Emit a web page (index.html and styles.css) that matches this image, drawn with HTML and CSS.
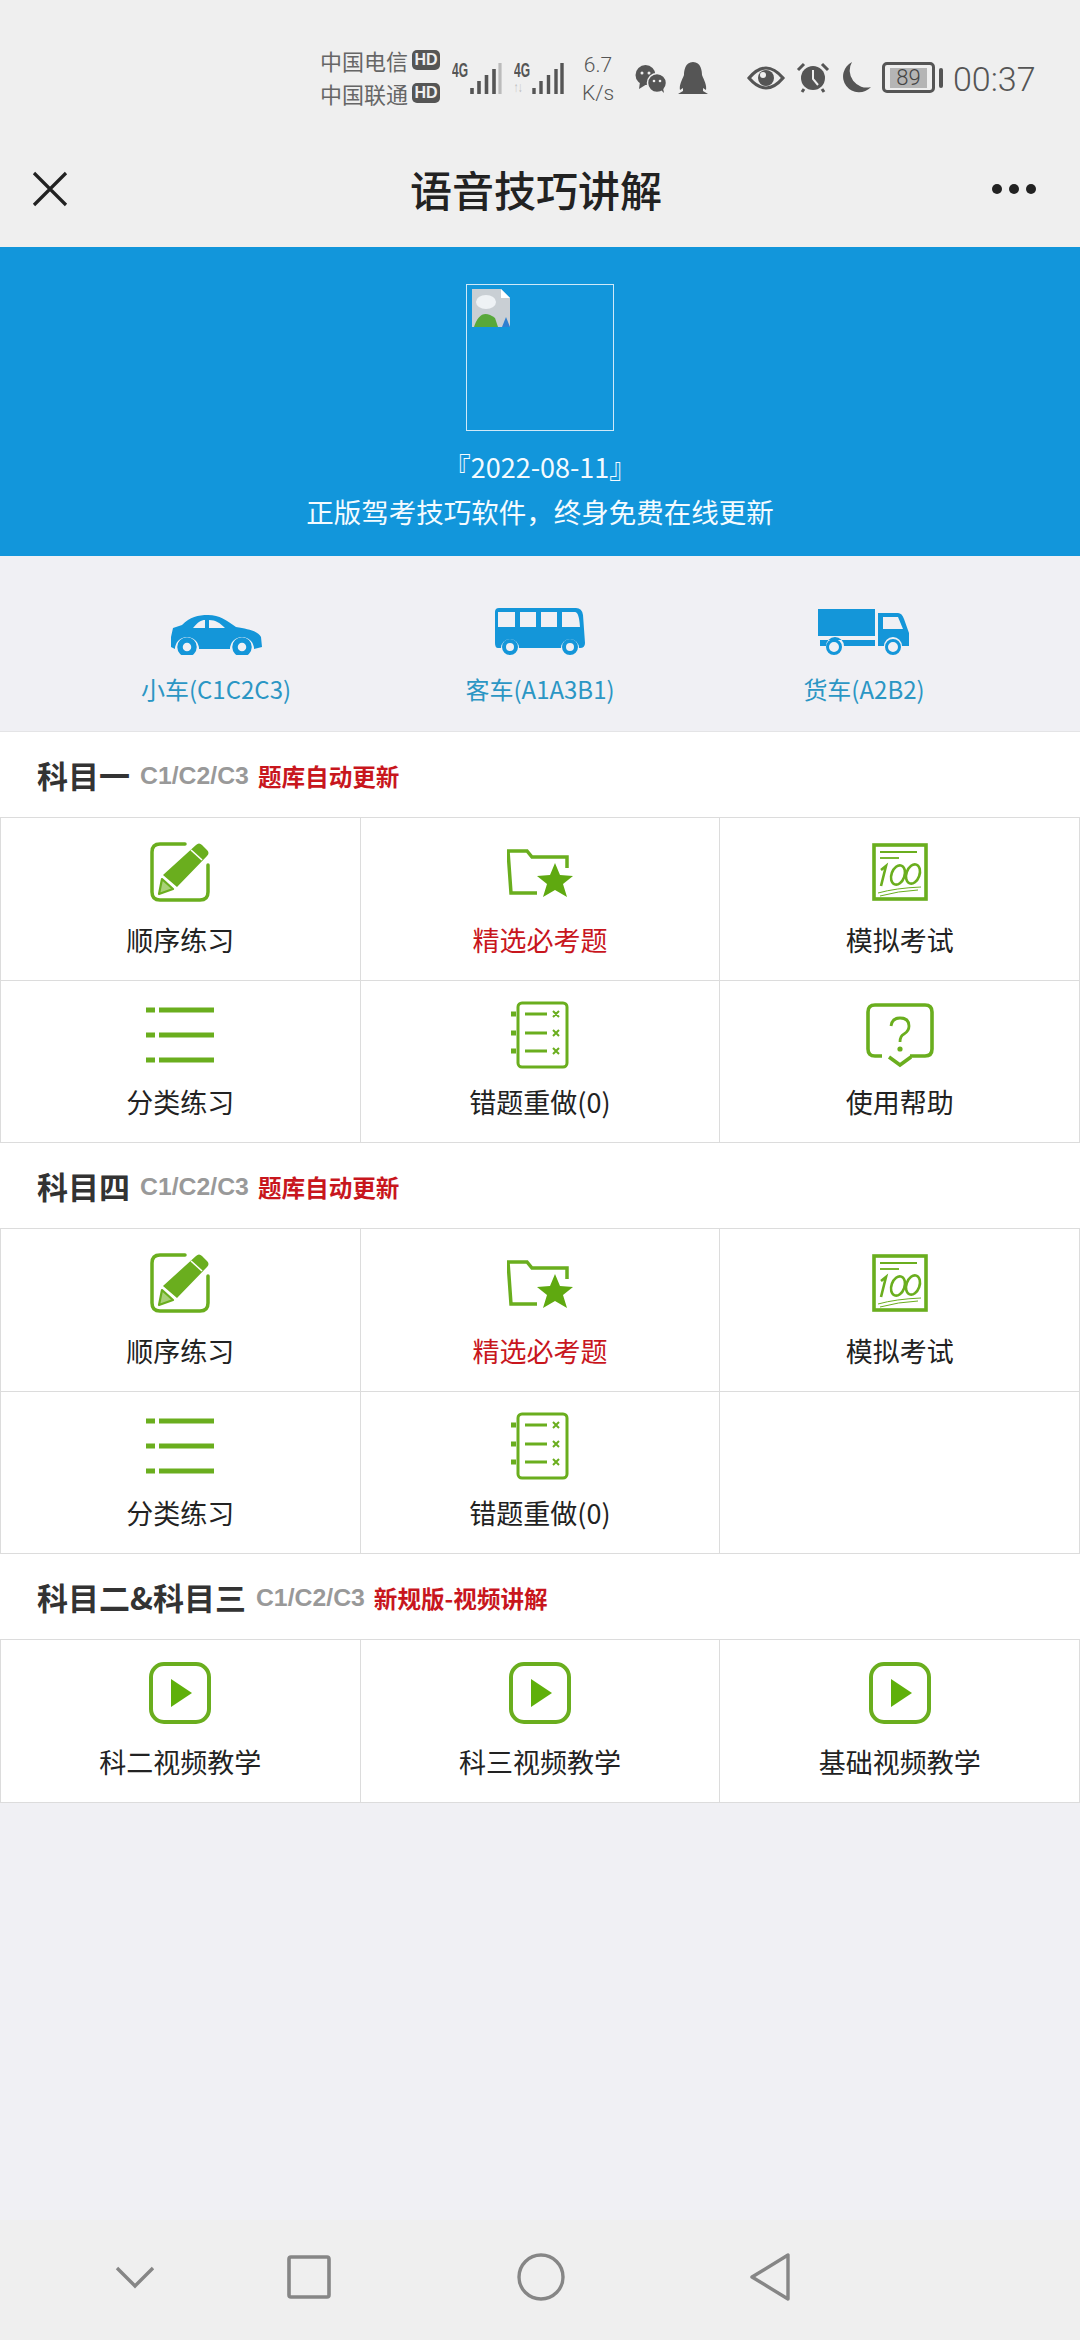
FILE: index.html
```html
<!DOCTYPE html>
<html lang="zh-CN">
<head>
<meta charset="utf-8">
<title>语音技巧讲解</title>
<link rel="stylesheet" href="styles.css">
</head>
<body>
<svg width="0" height="0" class="defs">
  <defs>
    <symbol id="i-edit" viewBox="0 0 60 60">
      <path d="M35 2H10Q2 2 2 10V50Q2 58 10 58H50Q58 58 58 50V23" fill="none" stroke="#6aae1e" stroke-width="3.5" stroke-linecap="round"/>
      <path d="M46 3Q49 0 52 3L57 8Q60 11 57 14L27 45L13 33Z" fill="#6aae1e"/>
      <path d="M12 37L23 47L9 52Z" fill="#a9d178" stroke="#6aae1e" stroke-width="2.2" stroke-linejoin="round"/>
      <path d="M41 8L52 18" stroke="#fff" stroke-width="1.6" fill="none"/>
    </symbol>
    <symbol id="i-star" viewBox="0 0 66 50">
      <path d="M30 44H4L1 2H20L25 8H60V19" fill="none" stroke="#6aae1e" stroke-width="3.5"/>
      <path d="M48 14L53 26L66 27L56 35L60 48L48 41L36 48L40 35L30 27L43 26Z" fill="#5fa910"/>
    </symbol>
    <symbol id="i-100" viewBox="0 0 56 58">
      <rect x="2" y="2" width="52" height="54" fill="none" stroke="#6aae1e" stroke-width="3.6"/>
      <path d="M8 9H45" stroke="#6aae1e" stroke-width="1.8"/>
      <path d="M8 15H27" stroke="#6aae1e" stroke-width="1.8"/>
      <path d="M9 27L14 23L9 43" fill="none" stroke="#6aae1e" stroke-width="2.6"/>
      <ellipse cx="26" cy="32" rx="6.5" ry="10" transform="rotate(20 26 32)" fill="none" stroke="#6aae1e" stroke-width="2.6"/>
      <ellipse cx="41" cy="31" rx="6.5" ry="10" transform="rotate(20 41 31)" fill="none" stroke="#6aae1e" stroke-width="2.6"/>
      <path d="M6 50Q24 45 49 44M8 53Q26 48 46 47" fill="none" stroke="#6aae1e" stroke-width="1"/>
    </symbol>
    <symbol id="i-list" viewBox="0 0 68 56">
      <path d="M0 3H9M13 3H68M0 28H9M13 28H68M0 53H9M13 53H68" stroke="#6aae1e" stroke-width="5"/>
    </symbol>
    <symbol id="i-wrong" viewBox="0 0 58 68">
      <rect x="7" y="2" width="49" height="64" rx="4" fill="none" stroke="#6aae1e" stroke-width="3"/>
      <path d="M0 13H5M0 32H5M0 50H5" stroke="#6aae1e" stroke-width="5"/>
      <path d="M14 13H36M14 32H36M14 50H36" stroke="#6aae1e" stroke-width="3"/>
      <path d="M42 10L48 16M48 10L42 16M42 29L48 35M48 29L42 35M42 47L48 53M48 47L42 53" stroke="#6aae1e" stroke-width="2"/>
    </symbol>
    <symbol id="i-help" viewBox="0 0 68 66">
      <path d="M16 53H9Q2 53 2 46V9Q2 2 9 2H59Q66 2 66 9V46Q66 53 59 53H44M23 54L34 62L45 54" fill="none" stroke="#6aae1e" stroke-width="3.6"/>
      <path d="M25 23Q26 15 34 15Q43 15 43 23Q43 28 38 31Q34 33 34 39" fill="none" stroke="#6aae1e" stroke-width="2.8"/>
      <circle cx="34" cy="46" r="2.6" fill="#6aae1e"/>
    </symbol>
    <symbol id="i-play" viewBox="0 0 62 62">
      <rect x="2" y="2" width="58" height="58" rx="13" fill="none" stroke="#6aae1e" stroke-width="4"/>
      <path d="M22 17L43 31L22 45Z" fill="#5fb00a"/>
    </symbol>
  </defs>
</svg>

<div class="page">
  <header class="top">
    <div class="status">
      <div class="carriers">
        <div class="carrier">中国电信<span class="hd">HD</span></div>
        <div class="carrier">中国联通<span class="hd">HD</span></div>
      </div>
      <div class="net"><span class="g">4G</span>
        <svg width="32" height="32" viewBox="0 0 32 32"><path d="M2 32V26M9 32V19M16.5 32V13M24 32V7" stroke="#555" stroke-width="3.6"/><path d="M30 32V1" stroke="#bbb" stroke-width="3.2"/></svg>
      </div>
      <div class="net net2"><span class="g">4G<em class="arrows">↑↓</em></span>
        <svg width="32" height="32" viewBox="0 0 32 32"><path d="M2 32V26M9 32V19M16.5 32V13M24 32V7M30 32V1" stroke="#555" stroke-width="3.4"/></svg>
      </div>
      <div class="speed"><span>6.7</span><span>K/s</span></div>
      <svg class="wechat" width="32" height="28" viewBox="0 0 32 28"><ellipse cx="10.5" cy="10" rx="10" ry="10" fill="#555"/><path d="M5 17L4 24L12 19Z" fill="#555"/><circle cx="22" cy="18" r="9.5" fill="#555" stroke="#efefef" stroke-width="1.5"/><path d="M26 25L29 28L28 23Z" fill="#555"/><circle cx="7" cy="8" r="1.5" fill="#efefef"/><circle cx="14" cy="8" r="1.5" fill="#efefef"/><circle cx="19" cy="16" r="1.3" fill="#efefef"/><circle cx="25" cy="16" r="1.3" fill="#efefef"/></svg>
      <svg class="qq" width="30" height="32" viewBox="0 0 30 32"><path d="M15 0C23 0 24 9 24 13C26 18 29 23 28 28L25 26V29L30 32H0L5 29V26L2 28C1 23 4 18 6 13C6 9 7 0 15 0Z" fill="#555"/></svg>
      <svg class="eye" width="38" height="26" viewBox="0 0 38 26"><path d="M2 13Q19 -7 36 13Q19 33 2 13Z" fill="none" stroke="#555" stroke-width="3.2"/><circle cx="19" cy="13" r="8" fill="#555"/><circle cx="16" cy="10" r="3" fill="#efefef"/></svg>
      <svg class="alarm" width="34" height="31" viewBox="0 0 34 31"><circle cx="17" cy="16" r="12" fill="#555"/><path d="M2 8L8 2M32 8L26 2" stroke="#555" stroke-width="3"/><path d="M17 8V17L22 23" stroke="#efefef" stroke-width="2" fill="none"/><path d="M8 27L6 30M26 27L28 30" stroke="#555" stroke-width="3"/></svg>
      <svg class="moon" width="30" height="31" viewBox="0 0 30 31"><path d="M11 0A16 16 0 1 0 30 25A17 17 0 0 1 11 0Z" fill="#555"/></svg>
      <div class="battery"><span class="cell">89</span></div><span class="nub"></span>
      <span class="clock">00:37</span>
    </div>
    <div class="titlebar">
      <svg class="close" width="36" height="36" viewBox="0 0 36 36"><path d="M2 2L34 34M34 2L2 34" stroke="#222" stroke-width="3.2"/></svg>
      <h1>语音技巧讲解</h1>
      <div class="dots"><i></i><i></i><i></i></div>
    </div>
  </header>

  <section class="banner">
    <div class="broken">
      <svg width="40" height="40" viewBox="0 0 40 40"><path d="M1 1H30L39 10V39H1Z" fill="#c9cfd4"/><path d="M30 1V10H39Z" fill="#fff"/><ellipse cx="15" cy="14" rx="10" ry="7" fill="#eef2f5"/><path d="M3 39C7 26 14 22 24 30L27 39Z" fill="#58a83a"/><path d="M31 39L35 29L39 39Z" fill="#2f7fd0"/></svg>
    </div>
    <p class="date">『2022-08-11』</p>
    <p class="slogan">正版驾考技巧软件，终身免费在线更新</p>
  </section>

  <nav class="types">
    <div class="type">
      <svg width="92" height="48" viewBox="0 0 92 48"><path d="M1 30L3 21L12 18C20 10 28 8 38 8C50 8 56 13 66 20C78 22 88 24 91 30L92 40L84 42A12 12 0 0 0 60 42H29A12 12 0 0 0 5 42L1 40Z" fill="#1496d9"/><path d="M23 21C28 15 31 13 35 13V21ZM39 13C46 13 50 16 55 21H39Z" fill="#f0f0f4"/><circle cx="17" cy="40" r="7" fill="#f0f0f4" stroke="#1496d9" stroke-width="5.5"/><circle cx="72" cy="40" r="7" fill="#f0f0f4" stroke="#1496d9" stroke-width="5.5"/></svg>
      <span>小车(C1C2C3)</span>
    </div>
    <div class="type">
      <svg width="92" height="48" viewBox="0 0 92 48"><path d="M5 1H82Q88 1 89 8L91 36Q91 41 86 41H85A9 9 0 0 0 67 41H25A9 9 0 0 0 7 41H4Q1 41 1 36V5Q1 1 5 1Z" fill="#1496d9"/><path d="M4 5H21V20H4ZM26 5H42V20H26ZM47 5H63V20H47ZM68 5H81Q85 5 86 20H68Z" fill="#f0f0f4"/><circle cx="16" cy="40" r="6" fill="#f0f0f4" stroke="#1496d9" stroke-width="4"/><circle cx="76" cy="40" r="6" fill="#f0f0f4" stroke="#1496d9" stroke-width="4"/></svg>
      <span>客车(A1A3B1)</span>
    </div>
    <div class="type">
      <svg width="92" height="48" viewBox="0 0 92 48"><path d="M0 2H57V29H0ZM2 33H57V39H26A9 9 0 0 0 8 39H2Z" fill="#1496d9"/><path d="M60 6H80Q84 6 86 12L91 26V39H84A9 9 0 0 0 66 39H60Z" fill="#1496d9"/><path d="M65 10H80L85 22H65Z" fill="#f0f0f4"/><circle cx="16" cy="40" r="6.5" fill="#f0f0f4" stroke="#1496d9" stroke-width="3"/><circle cx="75" cy="40" r="6.5" fill="#f0f0f4" stroke="#1496d9" stroke-width="3"/></svg>
      <span>货车(A2B2)</span>
    </div>
  </nav>

  <section>
    <div class="sec-head"><b class="name">科目一</b><b class="sub">C1/C2/C3</b><b class="tag">题库自动更新</b></div>
    <div class="grid">
      <div class="cell-item"><svg class="ic-edit"><use href="#i-edit"/></svg><span>顺序练习</span></div>
      <div class="cell-item"><svg class="ic-star"><use href="#i-star"/></svg><span class="red">精选必考题</span></div>
      <div class="cell-item"><svg class="ic-100"><use href="#i-100"/></svg><span>模拟考试</span></div>
      <div class="cell-item"><svg class="ic-list"><use href="#i-list"/></svg><span>分类练习</span></div>
      <div class="cell-item"><svg class="ic-wrong"><use href="#i-wrong"/></svg><span>错题重做(0)</span></div>
      <div class="cell-item"><svg class="ic-help"><use href="#i-help"/></svg><span>使用帮助</span></div>
    </div>
  </section>

  <section>
    <div class="sec-head"><b class="name">科目四</b><b class="sub">C1/C2/C3</b><b class="tag">题库自动更新</b></div>
    <div class="grid">
      <div class="cell-item"><svg class="ic-edit"><use href="#i-edit"/></svg><span>顺序练习</span></div>
      <div class="cell-item"><svg class="ic-star"><use href="#i-star"/></svg><span class="red">精选必考题</span></div>
      <div class="cell-item"><svg class="ic-100"><use href="#i-100"/></svg><span>模拟考试</span></div>
      <div class="cell-item"><svg class="ic-list"><use href="#i-list"/></svg><span>分类练习</span></div>
      <div class="cell-item"><svg class="ic-wrong"><use href="#i-wrong"/></svg><span>错题重做(0)</span></div>
      <div class="cell-item"></div>
    </div>
  </section>

  <section>
    <div class="sec-head"><b class="name">科目二&amp;科目三</b><b class="sub">C1/C2/C3</b><b class="tag">新规版-视频讲解</b></div>
    <div class="grid">
      <div class="cell-item"><svg class="ic-play"><use href="#i-play"/></svg><span>科二视频教学</span></div>
      <div class="cell-item"><svg class="ic-play"><use href="#i-play"/></svg><span>科三视频教学</span></div>
      <div class="cell-item"><svg class="ic-play"><use href="#i-play"/></svg><span>基础视频教学</span></div>
    </div>
  </section>

  <footer class="navbar">
    <svg width="40" height="24" viewBox="0 0 40 24"><path d="M2 3L20 21L38 3" fill="none" stroke="#868686" stroke-width="3.4"/></svg>
    <svg width="44" height="44" viewBox="0 0 44 44"><rect x="2" y="2" width="40" height="40" rx="2" fill="none" stroke="#868686" stroke-width="3.6"/></svg>
    <svg width="48" height="48" viewBox="0 0 48 48"><circle cx="24" cy="24" r="22" fill="none" stroke="#868686" stroke-width="3.4"/></svg>
    <svg width="42" height="48" viewBox="0 0 42 48"><path d="M39 2V46L3 24Z" fill="none" stroke="#868686" stroke-width="3.4" stroke-linejoin="round"/></svg>
  </footer>
</div>
</body>
</html>
```

FILE: styles.css
```css
* { box-sizing: border-box; }
html, body { margin: 0; padding: 0; }
body {
  width: 1080px;
  height: 2340px;
  background: #f0f0f4;
  font-family: "Noto Sans CJK SC", "Liberation Sans", sans-serif;
  color: #222;
  overflow: hidden;
}
.defs { position: absolute; }
.page { display: flex; flex-direction: column; height: 2340px; }

.top { height: 247px; background: #efefef; display: flex; flex-direction: column; }
.status {
  height: 130px;
  padding-left: 320px;
  display: flex;
  align-items: flex-start;
  color: #555;
}
.carriers { display: flex; flex-direction: column; gap: 7px; width: 132px; margin-top: 47px; }
.carrier { display: flex; align-items: center; gap: 4px; font-size: 22px; line-height: 26px; color: #666; white-space: nowrap; }
.hd {
  background: #555; color: #efefef; font: bold 16px/20px "Liberation Sans", sans-serif;
  width: 28px; height: 20px; border-radius: 5px; text-align: center;
}
.net { display: flex; width: 50px; height: 32px; margin-top: 62px; }
.net2 { margin-left: 12px; }
.net svg { display: block; }
.g {
  width: 18px; flex: none; position: relative;
  font: bold 20px/16px "Liberation Sans", sans-serif; color: #555;
  transform: scaleX(.6); transform-origin: left top;
  white-space: nowrap;
}
.arrows {
  position: absolute; left: 0; top: 18px;
  font: normal 14px/14px "Liberation Sans", sans-serif; color: #bbb;
}
.speed {
  display: flex; flex-direction: column; align-items: center;
  width: 40px; margin: 51px 0 0 14px;
  font: 300 21px/28px "Roboto", sans-serif; color: #555;
}
.wechat { margin: 65px 0 0 17px; }
.qq { margin: 62px 0 0 11px; }
.eye { margin: 65px 0 0 39px; }
.alarm { margin: 62px 0 0 11px; }
.moon { margin: 62px 0 0 11px; }
.battery {
  margin: 62px 0 0 11px; width: 53px; height: 31px; border: 3px solid #555; border-radius: 5px;
  display: flex; align-items: center; justify-content: center;
}
.cell { width: 37px; height: 20px; background: #b5b5b5; color: #444; font: 300 22px/20px "Roboto", sans-serif; text-align: center; }
.nub { width: 4px; height: 20px; margin: 68px 0 0 4px; background: #555; border-radius: 2px; }
.clock { font: 300 34px/36px "Roboto", sans-serif; color: #555; margin: 61px 0 0 10px; }

.titlebar { height: 117px; display: flex; align-items: center; justify-content: space-between; padding: 0 44px 0 32px; }
.titlebar h1 { margin: 0 0 0 12px; font-size: 42px; font-weight: 500; color: #222; }
.close { display: block; }
.dots { display: flex; gap: 7px; }
.dots i { width: 10px; height: 10px; border-radius: 50%; background: #222; }

.banner {
  height: 309px; background: #1296db; color: #f4fbff;
  display: flex; flex-direction: column; align-items: center;
  padding-top: 37px;
}
.broken { width: 148px; height: 147px; border: 1px solid #cfe9f8; padding: 3px 4px; }
.broken svg { display: block; }
.date { margin: 14px 0 0; font-size: 27px; line-height: 44px; }
.slogan { margin: 0; font-size: 27.5px; line-height: 44px; white-space: nowrap; }

.types {
  height: 176px; display: grid; grid-template-columns: 1fr 1fr 1fr;
  border-bottom: 1px solid #e4e4e6;
  padding: 51px 54px 0;
}
.type { display: flex; flex-direction: column; align-items: center; gap: 16px; color: #2b96c4; font-size: 24px; line-height: 36px; }
.type svg { display: block; }

.sec-head { height: 85px; background: #fff; display: flex; align-items: center; padding-left: 37px; white-space: nowrap; }
.name { font-size: 31px; color: #333; margin-right: 10px; font-weight: 700; }
.sub { font: bold 24.8px "Liberation Sans", sans-serif; color: #999; margin-right: 9px; margin-top: 3px; }
.tag { font-size: 23.6px; color: #c8161d; margin-top: 2px; font-weight: 700; }

.grid { display: grid; grid-template-columns: repeat(3, 1fr); background: #fff; border-top: 1px solid #dcdcdc; border-left: 1px solid #dcdcdc; }
.cell-item {
  height: 162.5px; border-right: 1px solid #dcdcdc; border-bottom: 1px solid #dcdcdc;
  display: flex; flex-direction: column; align-items: center;
  font-size: 27px; color: #222;
}
.cell-item svg { display: block; flex: none; }
.cell-item span { margin-top: auto; margin-bottom: 20px; line-height: 40px; white-space: nowrap; }
.red { color: #c8161d; }
.ic-edit { width: 60px; height: 60px; margin-top: 24px; }
.ic-star { width: 66px; height: 50px; margin-top: 31px; }
.ic-100 { width: 56px; height: 58px; margin-top: 25px; }
.ic-list { width: 68px; height: 56px; margin-top: 26px; }
.ic-wrong { width: 58px; height: 68px; margin-top: 20px; }
.ic-help { width: 68px; height: 66px; margin-top: 22px; }
.ic-play { width: 62px; height: 62px; margin-top: 22px; }

.navbar {
  margin-top: auto; height: 120px; background: #efefef;
  display: flex; align-items: center; padding: 0 0 6px 115px;
}
.navbar svg:nth-child(1) { margin-right: 132px; }
.navbar svg:nth-child(2) { margin-right: 186px; }
.navbar svg:nth-child(3) { margin-right: 184px; }
```
